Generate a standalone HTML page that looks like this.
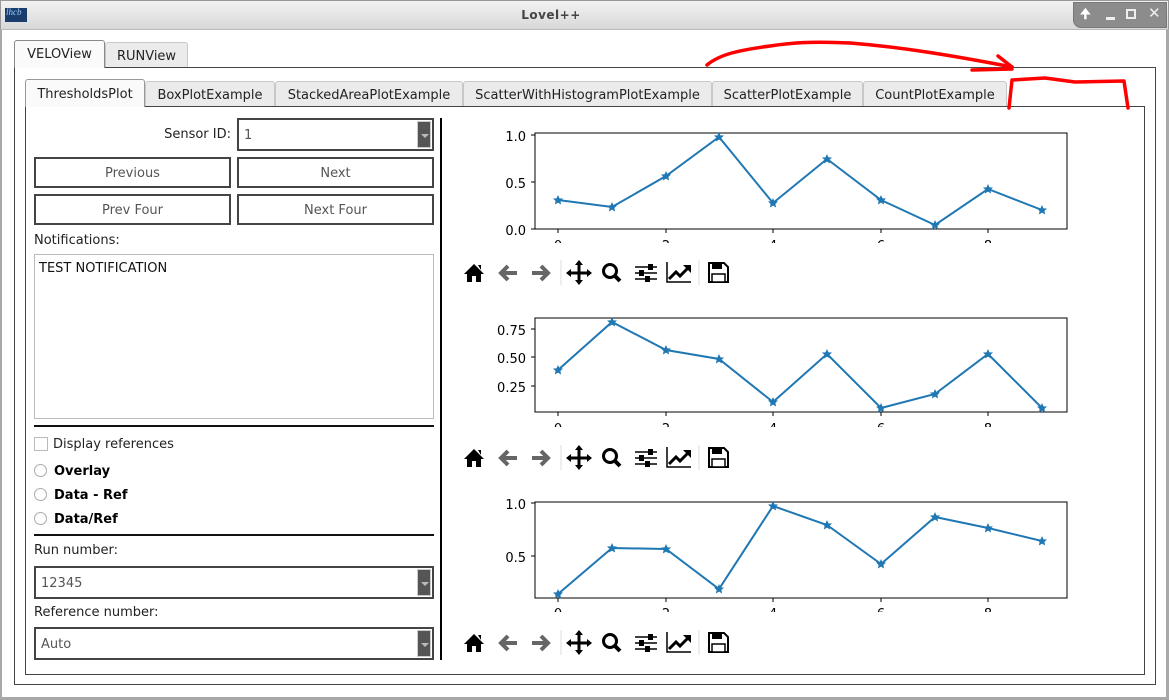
<!DOCTYPE html>
<html><head><meta charset="utf-8"><style>
*{box-sizing:border-box;margin:0;padding:0}
body{width:1169px;height:700px;overflow:hidden;background:#fff;font-family:"DejaVu Sans","Liberation Sans",sans-serif;font-size:13px;color:#222;position:relative}
.a{position:absolute}
.title{left:0;top:0;width:1169px;height:30px;background:linear-gradient(#f2f2f2,#d8d8d8);border:1px solid #999;border-bottom:1px solid #bbb}
.frame{left:0;top:28px;width:1169px;height:672px;border:2px solid #a8a8a8;border-top:none;border-right:3px solid #a8a8a8;border-bottom:3px solid #a8a8a8}
.tab{background:#ebebeb;border:1px solid #c8c8c8;border-bottom:none;border-radius:3px 3px 0 0;text-align:center;color:#222}
.tab.sel{background:#fafafa;border-color:#c8c8c8}
.pane{border:1px solid #444;background:#fff}
.btn{border:2px solid #444;background:#fff;text-align:center;color:#555;line-height:30px}
.combo{border:2px solid #444;background:#fff;color:#555;padding-left:5px;line-height:31px}
.combo .dd{position:absolute;right:1px;top:1px;width:14px;bottom:1px;background:#555;border:1px solid #ccc}
.combo .dd:after{content:"";position:absolute;left:3px;top:12px;border-left:4px solid transparent;border-right:4px solid transparent;border-top:4px solid #bbb}
.radio{width:13px;height:13px;border:1px solid #aaa;border-radius:50%;background:#fff}
b{font-weight:bold;color:#000}
</style></head><body>
<div class="a frame"></div>
<div class="a title"></div>
<div class="a" style="left:5px;top:8px;width:22px;height:14px;background:#1a3d6e"></div>
<div class="a" style="left:6px;top:7px;font:italic 9px 'Liberation Serif',serif;color:#9cf">lhcb</div>
<div class="a" style="left:0;width:1102px;top:8px;text-align:center;font-weight:bold;color:#444;font-size:12px;letter-spacing:.5px">Lovel++</div>
<div class="a" style="left:1073px;top:2px;width:94px;height:26px;background:#8c8c8c;border-radius:0 0 0 8px;border:1px solid #777"></div>
<div class="a" style="left:1080px;top:5px;color:#fff;font-size:13px;font-weight:bold">🠉</div>
<div class="a" style="left:1106px;top:17px;width:9px;height:3px;background:#eee"></div>
<div class="a" style="left:1126px;top:9px;width:10px;height:10px;border:2px solid #eee"></div>
<div class="a" style="left:1148px;top:4px;color:#eee;font-size:15px;font-weight:bold">✕</div>

<div class="a pane" style="left:14px;top:67px;width:1142px;height:618px"></div>
<div class="a tab sel" style="left:14px;top:40px;width:91px;height:28px;line-height:28px;border-color:#888">VELOView</div>
<div class="a tab" style="left:105px;top:42px;width:83px;height:25px;line-height:27px">RUNView</div>

<div class="a pane" style="left:25px;top:106px;width:1120px;height:569px"></div>
<div class="a tab sel" style="left:25px;top:79px;width:120px;height:28px;line-height:30px;border-color:#999">ThresholdsPlot</div>
<div class="a tab" style="left:145px;top:81px;width:130px;height:25px;line-height:28px">BoxPlotExample</div>
<div class="a tab" style="left:275px;top:81px;width:188px;height:25px;line-height:28px">StackedAreaPlotExample</div>
<div class="a tab" style="left:463px;top:81px;width:249px;height:25px;line-height:28px">ScatterWithHistogramPlotExample</div>
<div class="a tab" style="left:712px;top:81px;width:151px;height:25px;line-height:28px">ScatterPlotExample</div>
<div class="a tab" style="left:863px;top:81px;width:144px;height:25px;line-height:28px">CountPlotExample</div>

<div class="a" style="left:100px;width:131px;top:127px;text-align:right">Sensor ID:</div>
<div class="a combo" style="left:237px;top:118px;width:197px;height:33px">1<div class="dd"></div></div>
<div class="a btn" style="left:34px;top:157px;width:197px;height:31px">Previous</div>
<div class="a btn" style="left:237px;top:157px;width:197px;height:31px">Next</div>
<div class="a btn" style="left:34px;top:194px;width:197px;height:31px">Prev Four</div>
<div class="a btn" style="left:237px;top:194px;width:197px;height:31px">Next Four</div>
<div class="a" style="left:34px;top:233px">Notifications:</div>
<div class="a" style="left:34px;top:254px;width:400px;height:165px;border:1px solid #bbb;padding:6px 4px;color:#111">TEST NOTIFICATION</div>
<div class="a" style="left:34px;top:425px;width:400px;height:2px;background:#111"></div>
<div class="a" style="left:34px;top:437px;width:14px;height:14px;border:1px solid #bbb"></div>
<div class="a" style="left:53px;top:437px">Display references</div>
<div class="a radio" style="left:34px;top:464px"></div><div class="a" style="left:54px;top:464px"><b>Overlay</b></div>
<div class="a radio" style="left:34px;top:488px"></div><div class="a" style="left:54px;top:488px"><b>Data - Ref</b></div>
<div class="a radio" style="left:34px;top:512px"></div><div class="a" style="left:54px;top:512px"><b>Data/Ref</b></div>
<div class="a" style="left:34px;top:534px;width:400px;height:2px;background:#111"></div>
<div class="a" style="left:34px;top:543px">Run number:</div>
<div class="a combo" style="left:34px;top:566px;width:400px;height:33px">12345<div class="dd"></div></div>
<div class="a" style="left:34px;top:605px">Reference number:</div>
<div class="a combo" style="left:34px;top:627px;width:400px;height:33px">Auto<div class="dd"></div></div>
<div class="a" style="left:440px;top:118px;width:2px;height:542px;background:#000"></div>

<svg class="a" style="left:0;top:0" width="1169" height="700" font-family="DejaVu Sans,sans-serif" font-size="13">
<defs>
<clipPath id="c1"><rect x="450" y="0" width="700" height="243"/></clipPath>
<clipPath id="c2"><rect x="450" y="0" width="700" height="427"/></clipPath>
<clipPath id="c3"><rect x="450" y="0" width="700" height="612"/></clipPath>
<g id="tb">
 <path d="M9 16 L19 6 L29 16 L26 16 L26 24 L21 24 L21 18 L17 18 L17 24 L12 24 L12 16Z M23 7h3v5z" fill="#000"/>
 <path d="M62 15 H46 M53 8 L46 15 L53 22" stroke="#666" stroke-width="4" fill="none"/>
 <path d="M77 15 H93 M86 8 L93 15 L86 22" stroke="#666" stroke-width="4" fill="none"/>
 <line x1="106" y1="2" x2="106" y2="27" stroke="#ddd"/>
 <path d="M124 4 V25 M113 15 H135" stroke="#000" stroke-width="3"/>
 <path d="M124 2 L120 7 H128Z M124 27 L120 22 H128Z M111 15 L116 11 V19Z M137 15 L132 11 V19Z" fill="#000"/>
 <circle cx="155" cy="13" r="6.5" stroke="#000" stroke-width="3" fill="none"/>
 <path d="M159 17 L165 23" stroke="#000" stroke-width="4"/>
 <path d="M180 9 H202 M180 15 H202 M180 21 H202" stroke="#000" stroke-width="1.5"/>
 <rect x="193" y="6" width="5" height="6" fill="#000"/><rect x="184" y="12" width="5" height="6" fill="#000"/><rect x="190" y="18" width="5" height="6" fill="#000"/>
 <path d="M212 4 V24 H236" stroke="#000" stroke-width="1.5" fill="none"/>
 <path d="M214 21 L221 14 L225 18 L233 10" stroke="#000" stroke-width="3" fill="none"/>
 <path d="M228 7 H236 V15Z" fill="#000"/>
 <line x1="244" y1="2" x2="244" y2="27" stroke="#ddd"/>
 <path d="M254 5 H269 L273 9 V24 H254Z" stroke="#000" stroke-width="2" fill="none"/>
 <rect x="257" y="5" width="10" height="6" fill="#000"/><rect x="257" y="16" width="13" height="8" stroke="#000" stroke-width="1.5" fill="#fff"/>
</g>
<g id="st"><path d="M0 -5 L1.5 -1.6 L5 -1.5 L2.4 1 L3.1 4.5 L0 2.6 L-3.1 4.5 L-2.4 1 L-5 -1.5 L-1.5 -1.6Z" fill="#1f77b4"/></g>
</defs>
<!-- plot1 -->
<rect x="535" y="133" width="532" height="96" fill="none" stroke="#000"/>
<g stroke="#000"><line x1="531" y1="135" x2="535" y2="135"/><line x1="531" y1="182" x2="535" y2="182"/><line x1="531" y1="229" x2="535" y2="229"/></g>
<g text-anchor="end" fill="#000"><text x="526" y="141">1.0</text><text x="526" y="188">0.5</text><text x="526" y="235">0.0</text></g>
<g clip-path="url(#c1)" fill="#000" text-anchor="middle" stroke="#000"><g stroke="none"><text x="558" y="250">0</text><text x="666" y="250">2</text><text x="773" y="250">4</text><text x="881" y="250">6</text><text x="988" y="250">8</text></g>
<line x1="558" y1="229" x2="558" y2="233"/><line x1="666" y1="229" x2="666" y2="233"/><line x1="773" y1="229" x2="773" y2="233"/><line x1="881" y1="229" x2="881" y2="233"/><line x1="988" y1="229" x2="988" y2="233"/></g>
<polyline points="558,200 612,207 666,176 719,137 773,203 827,159 881,200 935,225 988,189 1042,210" fill="none" stroke="#1f77b4" stroke-width="2"/>
<use href="#st" x="558" y="200"/><use href="#st" x="612" y="207"/><use href="#st" x="666" y="176"/><use href="#st" x="719" y="137"/><use href="#st" x="773" y="203"/><use href="#st" x="827" y="159"/><use href="#st" x="881" y="200"/><use href="#st" x="935" y="225"/><use href="#st" x="988" y="189"/><use href="#st" x="1042" y="210"/>
<use href="#tb" x="455" y="258"/>
<!-- plot2 -->
<rect x="535" y="318" width="532" height="94" fill="none" stroke="#000"/>
<g stroke="#000"><line x1="531" y1="329" x2="535" y2="329"/><line x1="531" y1="357" x2="535" y2="357"/><line x1="531" y1="386" x2="535" y2="386"/></g>
<g text-anchor="end" fill="#000"><text x="526" y="335">0.75</text><text x="526" y="363">0.50</text><text x="526" y="392">0.25</text></g>
<g clip-path="url(#c2)" fill="#000" text-anchor="middle" stroke="#000"><g stroke="none"><text x="558" y="433">0</text><text x="666" y="433">2</text><text x="773" y="433">4</text><text x="881" y="433">6</text><text x="988" y="433">8</text></g>
<line x1="558" y1="412" x2="558" y2="416"/><line x1="666" y1="412" x2="666" y2="416"/><line x1="773" y1="412" x2="773" y2="416"/><line x1="881" y1="412" x2="881" y2="416"/><line x1="988" y1="412" x2="988" y2="416"/></g>
<polyline points="558,370 612,322 666,350 719,359 773,402 827,354 881,408 935,394 988,354 1042,408" fill="none" stroke="#1f77b4" stroke-width="2"/>
<use href="#st" x="558" y="370"/><use href="#st" x="612" y="322"/><use href="#st" x="666" y="350"/><use href="#st" x="719" y="359"/><use href="#st" x="773" y="402"/><use href="#st" x="827" y="354"/><use href="#st" x="881" y="408"/><use href="#st" x="935" y="394"/><use href="#st" x="988" y="354"/><use href="#st" x="1042" y="408"/>
<use href="#tb" x="455" y="443"/>
<!-- plot3 -->
<rect x="535" y="502" width="532" height="96" fill="none" stroke="#000"/>
<g stroke="#000"><line x1="531" y1="503" x2="535" y2="503"/><line x1="531" y1="556" x2="535" y2="556"/></g>
<g text-anchor="end" fill="#000"><text x="526" y="509">1.0</text><text x="526" y="562">0.5</text></g>
<g clip-path="url(#c3)" fill="#000" text-anchor="middle" stroke="#000"><g stroke="none"><text x="558" y="618">0</text><text x="666" y="618">2</text><text x="773" y="618">4</text><text x="881" y="618">6</text><text x="988" y="618">8</text></g>
<line x1="558" y1="598" x2="558" y2="602"/><line x1="666" y1="598" x2="666" y2="602"/><line x1="773" y1="598" x2="773" y2="602"/><line x1="881" y1="598" x2="881" y2="602"/><line x1="988" y1="598" x2="988" y2="602"/></g>
<polyline points="558,594 612,548 666,549 719,589 773,506 827,525 881,564 935,517 988,528 1042,541" fill="none" stroke="#1f77b4" stroke-width="2"/>
<use href="#st" x="558" y="594"/><use href="#st" x="612" y="548"/><use href="#st" x="666" y="549"/><use href="#st" x="719" y="589"/><use href="#st" x="773" y="506"/><use href="#st" x="827" y="525"/><use href="#st" x="881" y="564"/><use href="#st" x="935" y="517"/><use href="#st" x="988" y="528"/><use href="#st" x="1042" y="541"/>
<use href="#tb" x="455" y="628"/>
<!-- red annotation -->
<g stroke="#f00" stroke-width="3.5" fill="none" stroke-linecap="round" stroke-linejoin="round">
<path d="M707 65 C720 54 740 50 770 46 C790 43 810 41 850 43 C900 47 950 55 1012 67"/>
<path d="M998 56 L1012 67"/>
<path d="M972 70 L1012 69"/>
<path d="M1009 108 L1012 80 L1045 78 L1075 82 L1124 81 L1128 108"/>
</g>
</svg>
</body></html>
